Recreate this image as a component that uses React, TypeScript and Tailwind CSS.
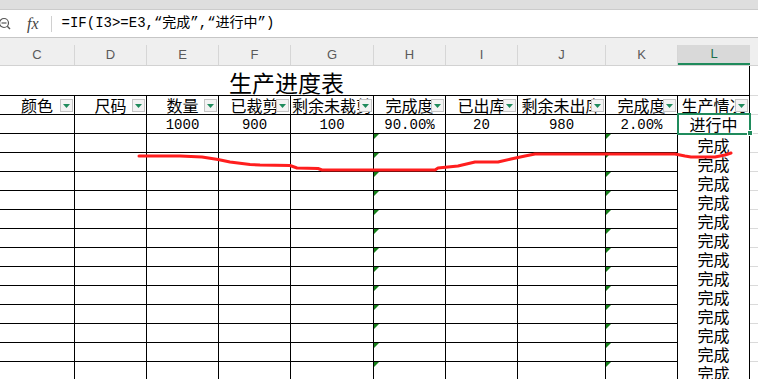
import React from "react";

const COLUMNS = [
  { key: "C", w: "w-[75px]", head: "颜色", value: "" },
  { key: "D", w: "w-[72px]", head: "尺码", value: "" },
  { key: "E", w: "w-[72px]", head: "数量", value: "1000" },
  { key: "F", w: "w-[72px]", head: "已裁剪", value: "900" },
  { key: "G", w: "w-[83px]", head: "剩余未裁剪", value: "100" },
  { key: "H", w: "w-[72px]", head: "完成度", value: "90.00%", flag: true },
  { key: "I", w: "w-[72px]", head: "已出库", value: "20" },
  { key: "J", w: "w-[88px]", head: "剩余未出库", value: "980" },
  { key: "K", w: "w-[72px]", head: "完成度", value: "2.00%", flag: true },
  { key: "L", w: "w-[72px]", head: "生产情况", value: "进行中" },
];

const CJK = "font-['Noto_Sans_CJK_SC',sans-serif]";
const MONO = "font-['Liberation_Mono','Noto_Sans_CJK_SC',monospace]";

const RED_LINE =
  "139,156 180,156 202,157 218,159.5 230,162 250,164.5 260,165 290,165.5 297,168 318,168.5 322,170 435,170 438,168 458,166 475,162 498,162 511,159 525,156 535,154 675,154 685,156 691,157 715,157 725,155 731,153";

function FilterButton() {
  return (
    <div className="absolute right-[1px] top-[3px] w-[13px] h-[13px] bg-[#f3f3f3] border border-[#c4c4c4] flex items-center justify-center">
      <svg width="7" height="4" viewBox="0 0 7 4">
        <polygon points="0,0 7,0 3.5,4" fill="#1f8b5c" />
      </svg>
    </div>
  );
}

function ErrorFlag() {
  return (
    <svg className="absolute left-0 top-0" width="5" height="5" viewBox="0 0 5 5">
      <polygon points="0,0 5,0 0,5" fill="#16801a" />
    </svg>
  );
}

export default function App() {
  const rows = Array.from({ length: 14 });

  return (
    <div className="relative w-[758px] h-[379px] overflow-hidden bg-white">
      {/* top band */}
      <div className="h-[10px] bg-[#dedede] border-b border-[#cbcbcb]" />

      {/* formula bar */}
      <div className="h-[28px] flex items-center border-b border-[#c6c6c6] bg-white">
        <svg className="ml-[-2px]" width="13" height="13" viewBox="0 0 13 13">
          <circle cx="6" cy="6" r="4.5" fill="none" stroke="#555" strokeWidth="1.2" />
          <line x1="3.5" y1="6" x2="8.5" y2="6" stroke="#555" strokeWidth="1.2" />
          <line x1="9.3" y1="9.3" x2="12" y2="12" stroke="#555" strokeWidth="1.4" />
        </svg>
        <span className="ml-[16px] text-[16px] italic text-[#444] font-['Liberation_Serif',serif]">
          fx
        </span>
        <div className="ml-[12px] w-px h-[16px] bg-[#d0d0d0]" />
        <span className={`ml-[10px] text-[14px] text-black ${MONO}`}>
          =IF(I3&gt;=E3,“完成”,“进行中”)
        </span>
      </div>

      {/* column letters */}
      <div className="h-[28px] flex bg-[#efefef] border-b border-[#d2d2d2]">
        <div className="flex w-[750px] pt-[7px]">
          {COLUMNS.map((c) =>
            c.key === "L" ? (
              <div
                key={c.key}
                className={`${c.w} h-[20px] bg-[#d9d9d9] border-b-2 border-[#1f8b5c] flex items-center justify-center text-[13px] text-[#1f6f4a] font-['Liberation_Sans',sans-serif]`}
              >
                {c.key}
              </div>
            ) : (
              <div
                key={c.key}
                className={`${c.w} h-[20px] border-r border-[#d6d6d6] flex items-center justify-center text-[13px] text-[#5a5a5a] font-['Liberation_Sans',sans-serif]`}
              >
                {c.key}
              </div>
            )
          )}
        </div>
        <div className="flex-1" />
      </div>

      {/* title row */}
      <div className="h-[30px] flex">
        <div className={`w-[750px] border-r border-b border-black pl-[229px] pt-[5px] text-[23px] leading-[23px] text-black ${CJK}`}>
          生产进度表
        </div>
        <div className="flex-1 border-b border-[#dadada]" />
      </div>

      {/* header row */}
      <div className="h-[19px] flex">
        {COLUMNS.map((c) => (
          <div
            key={c.key}
            className={`${c.w} relative h-full border-r border-b border-black overflow-hidden flex items-center justify-center`}
          >
            <span className={`whitespace-nowrap text-[16px] leading-[16px] text-black ${CJK}`}>
              {c.head}
            </span>
            <FilterButton />
          </div>
        ))}
        <div className="flex-1 border-b border-[#dadada]" />
      </div>

      {/* data row */}
      <div className="h-[19px] flex">
        {COLUMNS.map((c) => (
          <div
            key={c.key}
            className={`${c.w} h-full border-r border-b border-black flex items-center justify-center`}
          >
            {c.key === "L" ? (
              <span className={`text-[16px] leading-[16px] text-black ${CJK}`}>{c.value}</span>
            ) : (
              <span className={`text-[14px] leading-[14px] pt-[2px] text-black ${MONO}`}>{c.value}</span>
            )}
          </div>
        ))}
        <div className="flex-1 border-b border-[#dadada]" />
      </div>

      {/* remaining rows */}
      {rows.map((_, i) => (
        <div key={i} className="h-[19px] flex">
          {COLUMNS.map((c) =>
            c.key === "L" ? (
              <div
                key={c.key}
                className={`${c.w} h-full border-r border-black flex justify-center pt-[3px]`}
              >
                <span className={`text-[16px] leading-[16px] text-black ${CJK}`}>完成</span>
              </div>
            ) : (
              <div key={c.key} className={`${c.w} relative h-full border-r border-b border-black`}>
                {c.flag && <ErrorFlag />}
              </div>
            )
          )}
          <div className="flex-1 border-b border-[#dadada]" />
        </div>
      ))}

      {/* active cell */}
      <div className="absolute left-[677px] top-[113px] w-[74px] h-[22px] border-2 border-[#1f8b5c]" />
      <div className="absolute left-[747px] top-[130px] w-[6px] h-[6px] bg-[#1f8b5c] border border-white" />

      {/* hand drawn red mark */}
      <svg className="absolute left-0 top-0 pointer-events-none" width="758" height="379">
        <polyline
          points={RED_LINE}
          fill="none"
          stroke="#ff1e1e"
          strokeWidth="3"
          strokeLinejoin="round"
          strokeLinecap="round"
        />
      </svg>
    </div>
  );
}
